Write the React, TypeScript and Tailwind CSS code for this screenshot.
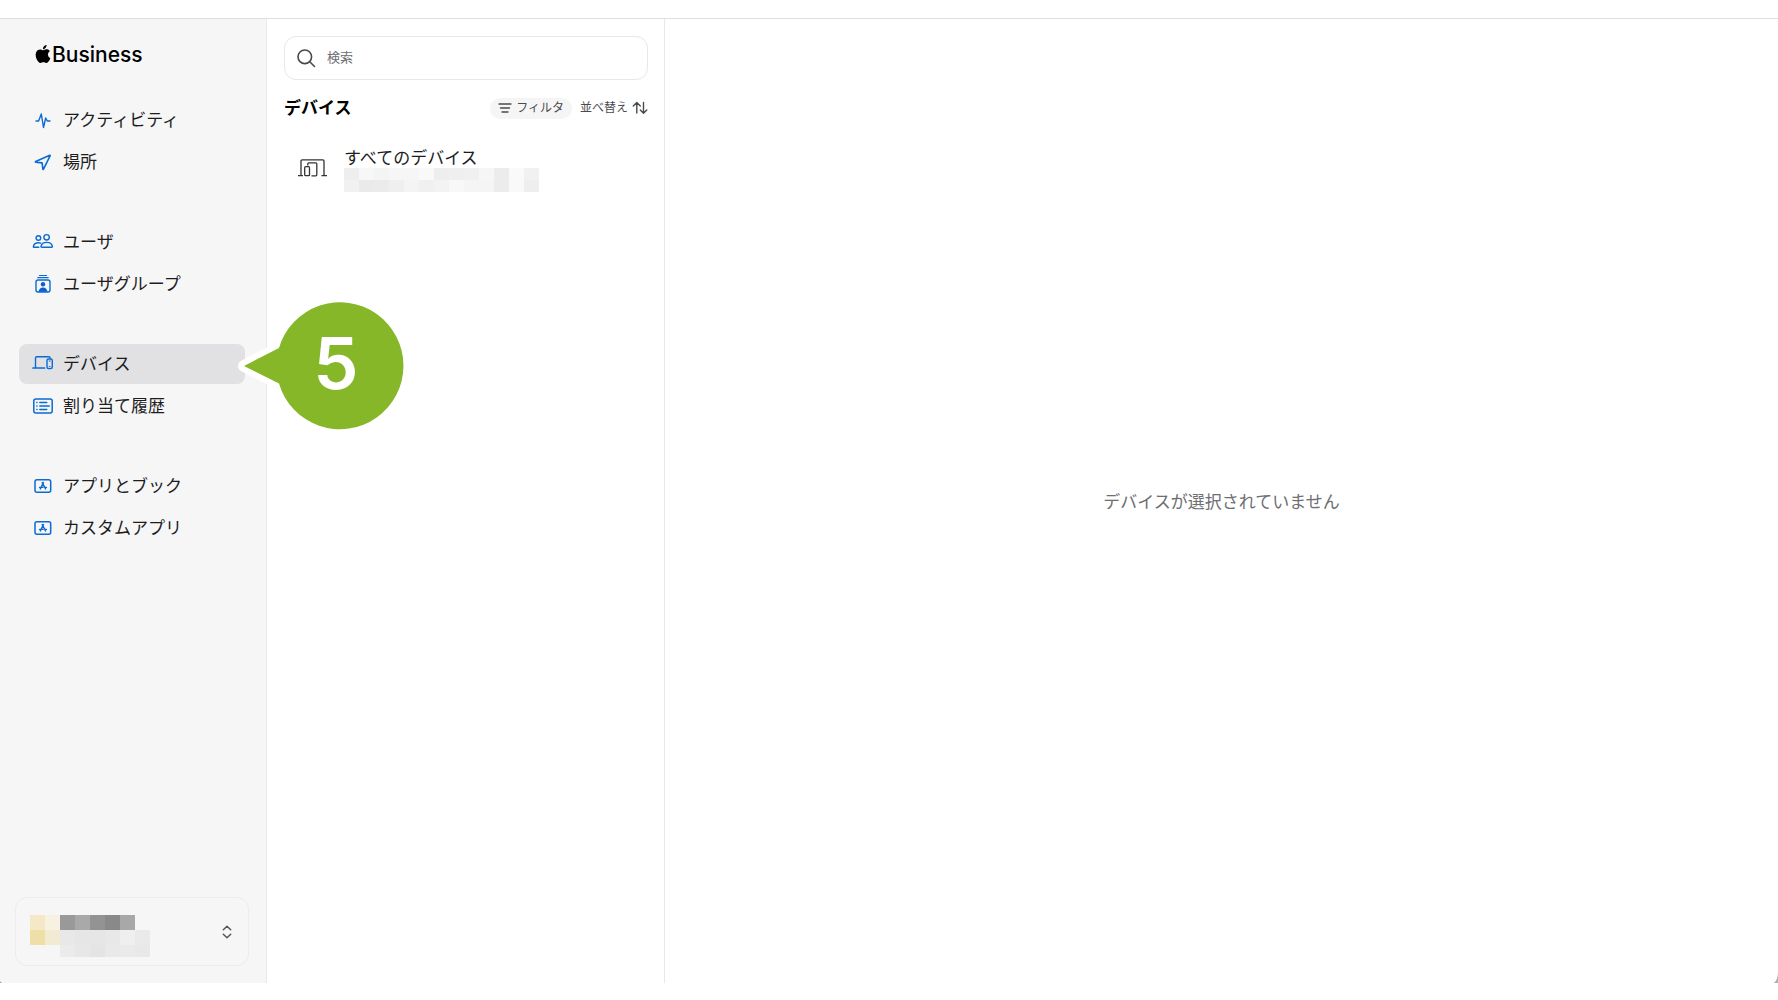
import type { ReactNode } from "react";
import { SiApple } from "react-icons/si";

type IconProps = { children: ReactNode };

function NavIcon({ children }: IconProps) {
  return (
    <svg
      viewBox="0 0 24 24"
      className="size-6 shrink-0"
      fill="none"
      stroke="#0b6bd3"
      strokeWidth="1.4"
      strokeLinecap="round"
      strokeLinejoin="round"
      aria-hidden="true"
    >
      {children}
    </svg>
  );
}

const activityIcon = (
  <NavIcon>
    <path d="M5 13h2.6L10.3 6l2.200 13.500 2.200-9.500 1.600 3H19" strokeWidth="1.4" />
  </NavIcon>
);

const locationIcon = (
  <NavIcon>
    <path d="M18.800 5.300 4.700 11.500q-.7.400.1.700l6.300.700.800 6.200q.3.700.6 0L19.200 5.700q.1-.5-.4-.4Z" strokeWidth="1.600" />
  </NavIcon>
);

const usersIcon = (
  <NavIcon>
    <circle cx="7.400" cy="8" r="2.300" />
    <circle cx="15.600" cy="7.300" r="2.700" />
    <path d="M7.800 17.300H3.200q-1 0-.8-1c.5-2 2.500-3.500 5-3.500q1.200 0 2.200.4" />
    <path d="M11 17.300h9.500q1.100 0 .9-1c-.5-2.200-2.900-3.900-5.700-3.900s-5.200 1.700-5.700 3.900q-.2 1 1 1Z" />
  </NavIcon>
);

const groupIcon = (
  <NavIcon>
    <path d="M8.500 3.500h7M6.800 5.700h10.400" strokeWidth="1.200" />
    <rect x="5" y="8" width="14" height="12" rx="2" />
    <g fill="#0b5fd0" stroke="none">
      <circle cx="12" cy="12.200" r="2.200" />
      <path d="M7.500 19.700c.3-2.500 2-4.200 4.500-4.200s4.200 1.700 4.500 4.200Z" />
    </g>
  </NavIcon>
);

const devicesIcon = (
  <NavIcon>
    <path d="M4.500 15.500V6.200q0-1.400 1.300-1.400h12q1.400 0 1.400 1.200" />
    <path d="M2 16h11.500" strokeWidth="1.700" />
    <rect x="16" y="7" width="5.300" height="9.600" rx="1.500" />
    <path d="M18.200 9h1M18.200 14.700h1" strokeWidth="1" />
  </NavIcon>
);

const historyIcon = (
  <NavIcon>
    <rect x="2.800" y="5" width="18.400" height="14" rx="2" strokeWidth="1.500" />
    <path d="M5.800 8.500h.3M5.800 12h.3M5.800 15.500h.3M8.800 8.500h7M8.800 12h9.500M8.800 15.500h7" strokeWidth="1.300" />
  </NavIcon>
);

const appIcon = (
  <NavIcon>
    <rect x="4" y="5.800" width="15.700" height="12.400" rx="2" strokeWidth="1.500" />
    <path d="m12.500 8.600-3.200 6.300M11.200 8.600l3.400 6.300M8.600 13.400h3.400M14 13.400h1.400" strokeWidth="1.400" />
  </NavIcon>
);

const navGroups = [
  [
    { label: "アクティビティ", icon: activityIcon },
    { label: "場所", icon: locationIcon },
  ],
  [
    { label: "ユーザ", icon: usersIcon },
    { label: "ユーザグループ", icon: groupIcon },
  ],
  [
    { label: "デバイス", icon: devicesIcon, active: true },
    { label: "割り当て履歴", icon: historyIcon },
  ],
  [
    { label: "アプリとブック", icon: appIcon },
    { label: "カスタムアプリ", icon: appIcon },
  ],
];

function StepMarker() {
  return (
    <div className="pointer-events-none absolute -top-12 left-full -ml-2 h-36 w-44">
      <svg viewBox="0 0 176 144" className="size-full" aria-hidden="true">
        <path
          d="M7 70 42 52A63.500 63.500 0 1 1 42 87.500Z"
          fill="#86b728"
          stroke="#fff"
          strokeWidth="12"
          strokeLinejoin="round"
          paintOrder="stroke"
        />
      </svg>
      <span className="absolute inset-y-0 left-0 flex w-[198px] items-center justify-center pb-[10px] text-7xl font-semibold text-white">
        5
      </span>
    </div>
  );
}

type MosaicRow = { height: string; colors: string[] };

function Mosaic({ rows }: { rows: MosaicRow[] }) {
  return (
    <div aria-hidden="true">
      {rows.map((row, i) => (
        <div key={i} className={`flex ${row.height}`}>
          {row.colors.map((color, j) => (
            <span key={j} className="w-[15px]" style={{ backgroundColor: color }} />
          ))}
        </div>
      ))}
    </div>
  );
}

const accountMosaic: MosaicRow[] = [
  {
    height: "h-[15px]",
    colors: ["#f4e8c6", "#f8f0e0", "#999999", "#a9a9a9", "#939393", "#898989", "#a8a8a8"],
  },
  {
    height: "h-[15px]",
    colors: ["#eddfa5", "#f3ead2", "#e8e8e8", "#e6e6e6", "#e6e6e6", "#e8e8e8", "#efefef", "#eaeaea"],
  },
  {
    height: "h-3",
    colors: ["transparent", "transparent", "#ebebeb", "#e7e7e7", "#e4e4e4", "#e9e9e9", "#eaeaea", "#e8e8e8"],
  },
];

const deviceMosaic: MosaicRow[] = [
  {
    height: "h-3",
    colors: [
      "#eeeeee", "#f7f7f7", "#f4f4f4", "#f6f6f6", "#f6f6f6", "#f9f9f9", "#eeeeee",
      "#efefef", "#f0f0f0", "#f6f6f6", "#ececec", "#fafafa", "#f1f1f1",
    ],
  },
  {
    height: "h-3",
    colors: [
      "#f1f1f1", "#eaeaea", "#ebebeb", "#efefef", "#f4f4f4", "#f0f0f0", "#f3f3f3",
      "#f8f8f8", "#f5f5f5", "#f5f5f5", "#ececec", "#f9f9f9", "#eeeeee",
    ],
  },
];

function Sidebar() {
  return (
    <aside className="flex w-[267px] shrink-0 flex-col border-r border-[#e8e8e8] bg-[#f6f6f6]">
      <div className="flex items-center pt-5 pl-[34px] text-black">
        <SiApple className="mb-0.5 size-[18px]" aria-hidden="true" />
        <span className="text-[21px] leading-8 font-medium">Business</span>
      </div>

      <nav className="mt-[29px] flex flex-col gap-10 pr-[21px] pl-[19px]">
        {navGroups.map((group, i) => (
          <ul key={i} className="flex flex-col gap-0.5">
            {group.map((item) => (
              <li key={item.label} className="relative">
                <a
                  href="#"
                  aria-current={item.active ? "page" : undefined}
                  className={`flex h-10 items-center gap-2 rounded-lg pl-3 text-[17px] text-[#1d1d1f] ${
                    item.active ? "bg-[#e1e1e4]" : ""
                  }`}
                >
                  {item.icon}
                  <span className="pt-0.5">{item.label}</span>
                </a>
                {item.active && <StepMarker />}
              </li>
            ))}
          </ul>
        ))}
      </nav>

      <button
        type="button"
        aria-label="アカウント"
        className="mr-[17px] mt-auto mb-[17px] ml-[15px] flex h-[69px] items-center justify-between rounded-xl border border-[#ececec] px-[14px]"
      >
        <div className="pt-[9px]">
          <Mosaic rows={accountMosaic} />
        </div>
        <svg
          viewBox="0 0 14 14"
          className="size-[14px]"
          fill="none"
          stroke="#555"
          strokeWidth="1.500"
          strokeLinecap="round"
          strokeLinejoin="round"
          aria-hidden="true"
        >
          <path d="m3.300 4.800 3.700-3.500 3.700 3.500M3.300 9.200l3.700 3.500 3.700-3.500" />
        </svg>
      </button>
    </aside>
  );
}

function DeviceList() {
  return (
    <section className="w-[398px] shrink-0 border-r border-[#e8e8e8] pt-[17px] pr-4 pl-[17px]">
      <label className="flex h-11 items-center gap-[11px] rounded-xl border border-[#e8e8e8] pl-[11px]">
        <svg
          viewBox="0 0 20 20"
          className="size-5 shrink-0"
          fill="none"
          stroke="#4a4a4e"
          strokeWidth="1.600"
          strokeLinecap="round"
          aria-hidden="true"
        >
          <circle cx="8.800" cy="8.800" r="6.800" />
          <path d="m13.800 13.800 4.700 4.700" />
        </svg>
        <input
          type="search"
          aria-label="検索"
          placeholder="検索"
          className="w-full bg-transparent text-[13px] outline-none placeholder:text-[#6e6e73]"
        />
      </label>

      <div className="mt-4 flex h-6 items-center">
        <h1 className="pt-0.5 text-[17px] font-bold text-black">デバイス</h1>
        <button
          type="button"
          className="ml-auto flex h-[21px] items-center gap-1 rounded-full bg-[#f5f5f5] px-2 text-xs text-[#4a4a4e]"
        >
          <svg
            viewBox="0 0 14 12"
            className="h-3 w-[14px]"
            stroke="#4a4a4e"
            strokeWidth="1.300"
            strokeLinecap="round"
            aria-hidden="true"
          >
            <path d="M1 2h12M2.500 6h9M4 10h6" />
          </svg>
          フィルタ
        </button>
        <button type="button" className="ml-2 flex items-center gap-1 text-xs text-[#4a4a4e]">
          並べ替え
          <svg
            viewBox="0 0 16 14"
            className="h-[14px] w-4"
            fill="none"
            stroke="#4a4a4e"
            strokeWidth="1.400"
            strokeLinecap="round"
            strokeLinejoin="round"
            aria-hidden="true"
          >
            <path d="M4.800 12V1.500M1.300 5l3.500-3.500L8.300 5M11.500 1.500v10.700M8.300 9l3.200 3.200L14.800 9" />
          </svg>
        </button>
      </div>

      <a href="#" className="mt-7 flex gap-4 pl-3">
        <svg
          viewBox="0 0 32 20"
          className="mt-[10px] h-5 w-8 shrink-0"
          fill="none"
          stroke="#333336"
          strokeWidth="1.300"
          aria-hidden="true"
        >
          <path d="M5 17.500V3q0-1.200 1.200-1.200h20.600q1.200 0 1.200 1.200v14.500M2 17.700h5M25.500 17.700h5.500" />
          <path d="M11.800 7.500V5.800q0-1 1-1h7q1 0 1 1v11q0 1-1 1h-4.300" />
          <rect x="8.700" y="8.700" width="4.800" height="9" rx="1" />
        </svg>
        <div>
          <p className="text-[17px] leading-5 text-[#1d1d1f]">すべてのデバイス</p>
          <Mosaic rows={deviceMosaic} />
        </div>
      </a>
    </section>
  );
}

export default function App() {
  return (
    <div
      lang="ja"
      className="flex h-screen flex-col bg-white pt-[18px] pb-[17px] font-['Inter','Noto_Sans_CJK_JP',sans-serif]"
    >
      <div className="relative flex min-h-0 flex-1 border-t border-[#dedede]">
        <Sidebar />
        <DeviceList />
        <main className="flex flex-1 items-center justify-center">
          <p className="pt-1 text-[17px] text-[#6e6e73]">デバイスが選択されていません</p>
        </main>
        {/* rounded window corners */}
        <svg viewBox="0 0 4 10" className="absolute right-0 bottom-0 h-[10px] w-1" fill="#b0b0b0" aria-hidden="true">
          <path d="M4 0Q3.500 7 0 10h4Z" />
        </svg>
        <svg viewBox="0 0 2 2" className="absolute bottom-0 left-0 size-0.5" fill="#9a9a9a" aria-hidden="true">
          <path d="M0 0q.5 1.500 2 2H0Z" />
        </svg>
      </div>
    </div>
  );
}
